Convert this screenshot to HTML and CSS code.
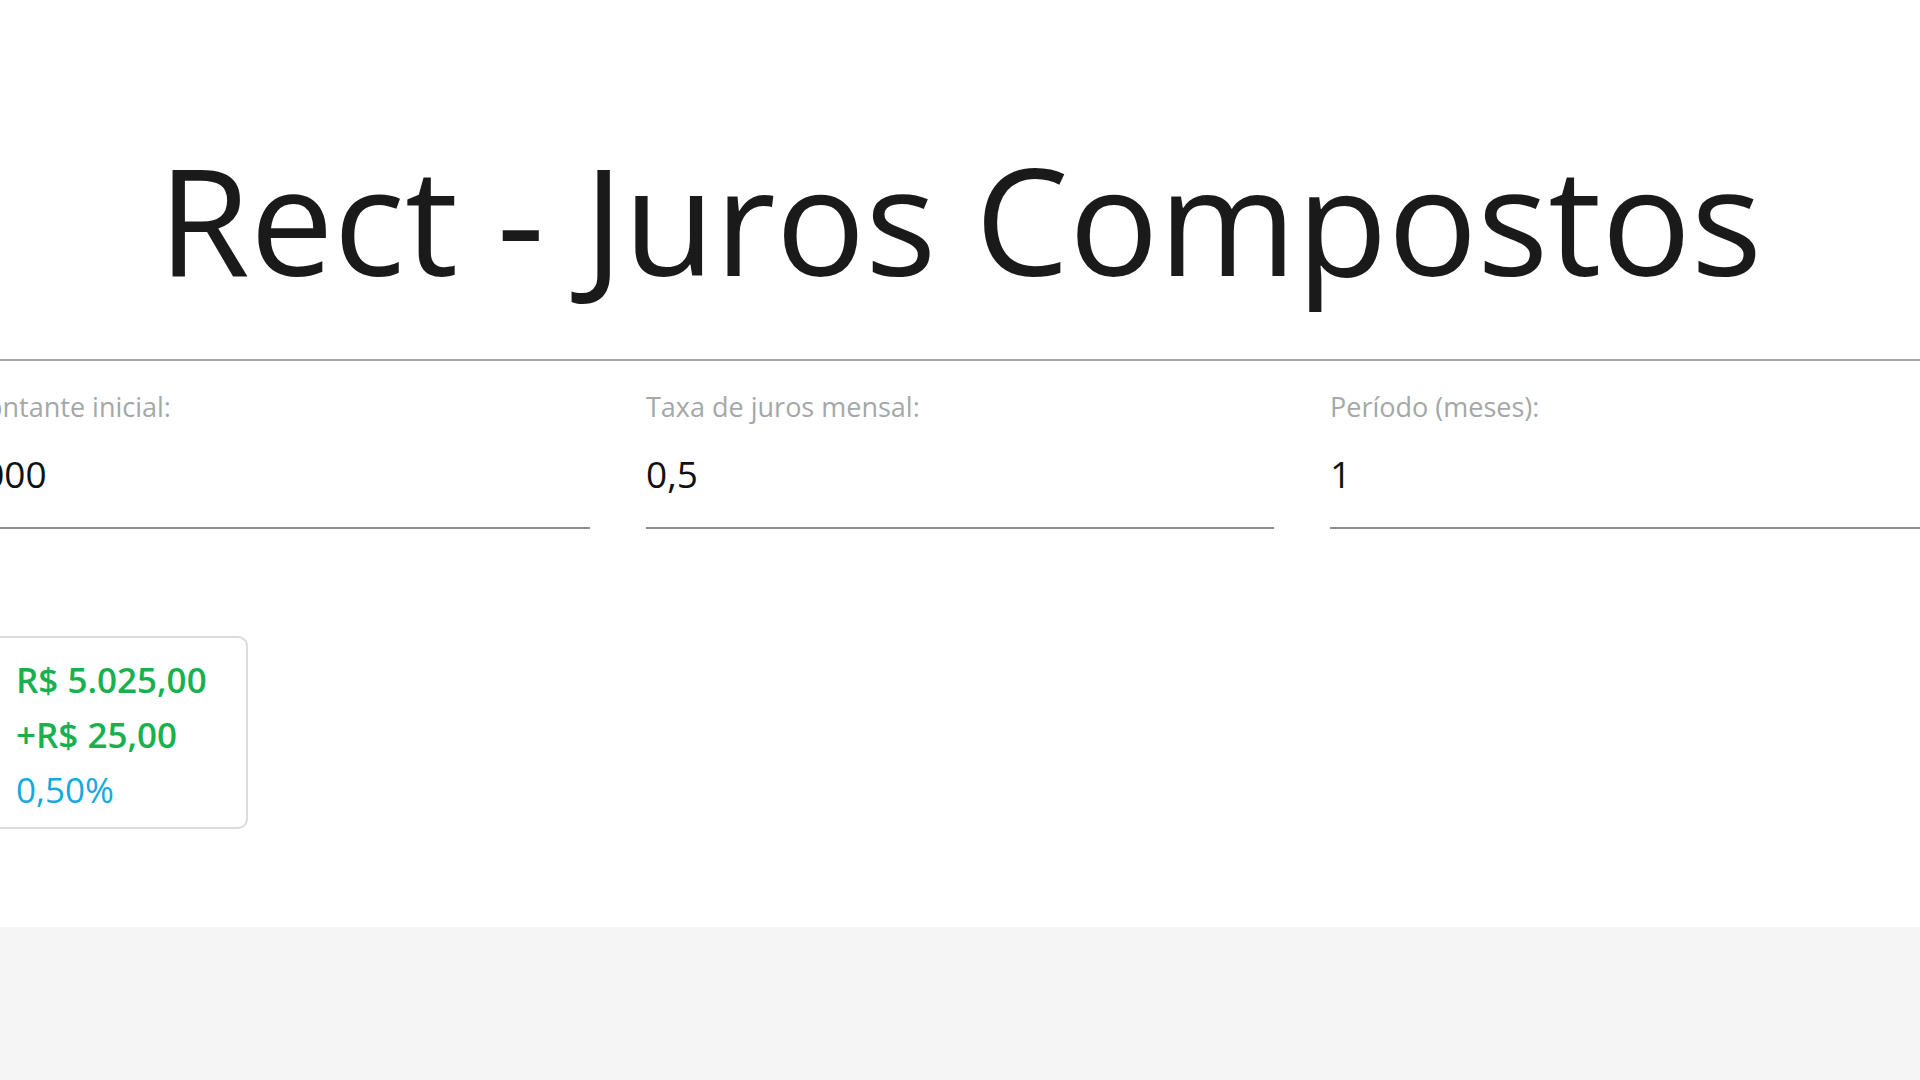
FILE: index.html
```html
<!DOCTYPE html>
<html lang="pt-BR">
<head>
<meta charset="utf-8">
<title>Rect - Juros Compostos</title>
<link rel="stylesheet" href="styles.css">
</head>
<body>
<main class="page">
  <div class="container">
    <h1 class="title">Rect - Juros Compostos</h1>
    <hr class="divider">
    <div class="fields">
      <div class="field">
        <label class="field-label">Montante inicial:</label>
        <div class="field-input">5000</div>
      </div>
      <div class="field">
        <label class="field-label">Taxa de juros mensal:</label>
        <div class="field-input">0,5</div>
      </div>
      <div class="field">
        <label class="field-label">Período (meses):</label>
        <div class="field-input">1</div>
      </div>
    </div>
    <div class="results">
      <div class="card">
        <div class="card-total">R$ 5.025,00</div>
        <div class="card-gain">+R$ 25,00</div>
        <div class="card-rate">0,50%</div>
      </div>
    </div>
  </div>
</main>
<footer class="footer"></footer>
</body>
</html>
```
FILE: styles.css
```css
html, body {
  margin: 0;
  padding: 0;
  background: #ffffff;
  overflow-x: hidden;
}
body {
  font-family: "Open Sans", "Noto Sans", sans-serif;
  color: #1a1a1a;
}
.page {
  height: 927px;
  background: #ffffff;
}
.container {
  width: 1996px;
  margin-left: calc((100% - 1996px) / 2);
  padding-top: 130px;
}
.title {
  margin: 0;
  font-size: 149px;
  line-height: 1.2;
  font-weight: 400;
  text-align: center;
  color: #1a1a1a;
}
.divider {
  margin: 50px 0 0;
  border: 0;
  border-top: 2px solid #a8a8a8;
  height: 0;
}
.fields {
  display: grid;
  grid-template-columns: repeat(3, 1fr);
  column-gap: 56px;
  padding-top: 30px;
}
.field {
  display: flex;
  flex-direction: column;
}
.field-label {
  font-size: 27px;
  line-height: 1.2;
  color: #a4a8a8;
}
.field-input {
  margin-top: 29px;
  font-size: 37px;
  line-height: 1.2;
  color: #111111;
  padding-bottom: 30px;
  border-bottom: 2px solid #8e8e8e;
}
.results {
  padding-top: 107px;
  display: flex;
}
.card {
  margin-left: 15px;
  width: 230px;
  padding: 14px 0 10px 37px;
  border: 2px solid #dcdcdc;
  border-radius: 10px;
  font-size: 35px;
  line-height: 55px;
}
.card-total, .card-gain {
  color: #19b14f;
  font-weight: 600;
}
.card-rate {
  color: #16a9df;
}
.footer {
  height: 200px;
  background: #f5f5f5;
}
```
